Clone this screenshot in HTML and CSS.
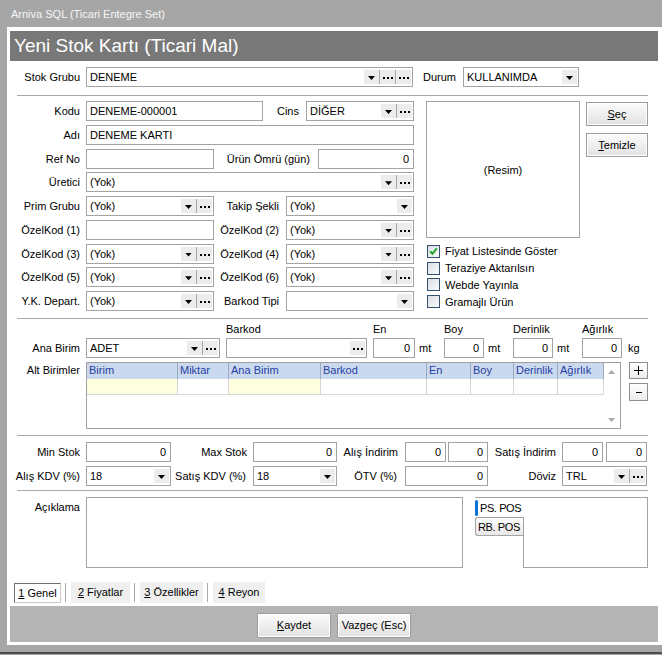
FILE: index.html
```html
<!DOCTYPE html>
<html>
<head>
<meta charset="utf-8">
<title>Yeni Stok Kartı (Ticari Mal)</title>
<link rel="stylesheet" href="styles.css">
</head>
<body>
<div class="caption">Arniva SQL (Ticari Entegre Set)</div>
<div class="window">
  <div class="head">Yeni Stok Kartı (Ticari Mal)</div>
  <div class="form">
    <div class="row">
      <label class="lbl">Stok Grubu</label>
      <div class="fld w327"><span class="val">DENEME</span><i class="dd"></i><i class="dt"></i><i class="dt"></i></div>
      <label class="mid w43">Durum</label>
      <div class="fld w116"><span class="val">KULLANIMDA</span><i class="dd"></i></div>
    </div>
    <div class="sep s1"></div>

    <div class="top">
      <div class="left">
        <div class="row">
          <label class="lbl">Kodu</label>
          <div class="fld w177"><span class="val">DENEME-000001</span></div>
          <label class="mid w36">Cins</label>
          <div class="fld w108"><span class="val">DİĞER</span><i class="dd"></i><i class="dt"></i></div>
        </div>
        <div class="row">
          <label class="lbl">Adı</label>
          <div class="fld w328"><span class="val">DENEME KARTI</span></div>
        </div>
        <div class="row">
          <label class="lbl">Ref No</label>
          <div class="fld w128"><span class="val"></span></div>
          <label class="mid w96">Ürün Ömrü (gün)</label>
          <div class="fld w96 num"><span class="val">0</span></div>
        </div>
        <div class="row">
          <label class="lbl">Üretici</label>
          <div class="fld w328"><span class="val">(Yok)</span><i class="dd"></i><i class="dt"></i></div>
        </div>
        <div class="row">
          <label class="lbl">Prim Grubu</label>
          <div class="fld w128"><span class="val">(Yok)</span><i class="dd"></i><i class="dt"></i></div>
          <label class="mid w65">Takip Şekli</label>
          <div class="fld w128"><span class="val">(Yok)</span><i class="dd"></i></div>
        </div>
        <div class="row">
          <label class="lbl">ÖzelKod (1)</label>
          <div class="fld w128"><span class="val"></span></div>
          <label class="mid w65">ÖzelKod (2)</label>
          <div class="fld w128"><span class="val">(Yok)</span><i class="dd"></i><i class="dt"></i></div>
        </div>
        <div class="row">
          <label class="lbl">ÖzelKod (3)</label>
          <div class="fld w128"><span class="val">(Yok)</span><i class="dd"></i><i class="dt"></i></div>
          <label class="mid w65">ÖzelKod (4)</label>
          <div class="fld w128"><span class="val">(Yok)</span><i class="dd"></i><i class="dt"></i></div>
        </div>
        <div class="row">
          <label class="lbl">ÖzelKod (5)</label>
          <div class="fld w128"><span class="val">(Yok)</span><i class="dd"></i><i class="dt"></i></div>
          <label class="mid w65">ÖzelKod (6)</label>
          <div class="fld w128"><span class="val">(Yok)</span><i class="dd"></i><i class="dt"></i></div>
        </div>
        <div class="row">
          <label class="lbl">Y.K. Depart.</label>
          <div class="fld w128"><span class="val">(Yok)</span><i class="dd"></i><i class="dt"></i></div>
          <label class="mid w65">Barkod Tipi</label>
          <div class="fld w128"><span class="val"></span><i class="dd"></i></div>
        </div>
      </div>

      <div class="media">
        <div class="pic">(Resim)</div>
        <div class="checks">
          <div class="chk"><span class="box"><svg width="11" height="11" viewBox="0 0 11 11"><path d="M2.2 5.4 L4.4 7.8 L8.8 2.4" fill="none" stroke="#21a121" stroke-width="2"/></svg></span>Fiyat Listesinde Göster</div>
          <div class="chk"><span class="box"></span>Teraziye Aktarılsın</div>
          <div class="chk"><span class="box"></span>Webde Yayınla</div>
          <div class="chk"><span class="box"></span>Gramajlı Ürün</div>
        </div>
      </div>

      <div class="side">
        <div class="btn sbtn"><u>S</u>eç</div>
        <div class="btn sbtn"><u>T</u>emizle</div>
      </div>
    </div>
    <div class="sep s2"></div>

    <div class="dimhead">
      <span class="dh-barkod">Barkod</span>
      <span class="dh-en">En</span>
      <span class="dh-boy">Boy</span>
      <span class="dh-der">Derinlik</span>
      <span>Ağırlık</span>
    </div>
    <div class="row r-ana">
      <label class="lbl">Ana Birim</label>
      <div class="fld w134"><span class="val">ADET</span><i class="dd"></i><i class="dt"></i></div>
      <div class="fld w141 gap6"><span class="val"></span><i class="dt"></i></div>
      <div class="fld w42 gap6 num"><span class="val">0</span></div>
      <span class="unit">mt</span>
      <div class="fld w40 num"><span class="val">0</span></div>
      <span class="unit">mt</span>
      <div class="fld w40 num"><span class="val">0</span></div>
      <span class="unit">mt</span>
      <div class="fld w40 num"><span class="val">0</span></div>
      <span class="unit kg">kg</span>
    </div>

    <div class="gridrow">
      <label class="lbl">Alt Birimler</label>
      <div class="grid">
        <div class="gbody">
          <div class="gcols ghead">
            <span>Birim</span><span>Miktar</span><span>Ana Birim</span><span>Barkod</span><span>En</span><span>Boy</span><span>Derinlik</span><span>Ağırlık</span>
          </div>
          <div class="gcols gline">
            <span class="y"></span><span></span><span class="y"></span><span></span><span></span><span></span><span></span><span></span>
          </div>
        </div>
        <div class="vscroll"><i class="up"></i><i class="down"></i></div>
      </div>
      <div class="pm">
        <div class="pmb plus"></div>
        <div class="pmb minus"></div>
      </div>
    </div>
    <div class="sep s3"></div>

    <div class="row r-min">
      <label class="lbl">Min Stok</label>
      <div class="fld w85 num"><span class="val">0</span></div>
      <label class="mid w76">Max Stok</label>
      <div class="fld w84 num"><span class="val">0</span></div>
      <label class="mid w61">Alış İndirim</label>
      <div class="fld w41 num"><span class="val">0</span></div>
      <div class="fld w40 num gap2"><span class="val">0</span></div>
      <label class="mid w68">Satış İndirim</label>
      <div class="fld w41 num"><span class="val">0</span></div>
      <div class="fld w41 num gap3"><span class="val">0</span></div>
    </div>
    <div class="row r-kdv">
      <label class="lbl">Alış KDV (%)</label>
      <div class="fld w85"><span class="val">18</span><i class="dd"></i></div>
      <label class="mid w75">Satış KDV (%)</label>
      <div class="fld w84"><span class="val">18</span><i class="dd"></i></div>
      <label class="mid w60">ÖTV (%)</label>
      <div class="fld w83 num"><span class="val">0</span></div>
      <label class="mid w68">Döviz</label>
      <div class="fld w85"><span class="val">TRL</span><i class="dd"></i><i class="dt"></i></div>
    </div>
    <div class="sep s4"></div>

    <div class="note">
      <label class="lbl">Açıklama</label>
      <div class="memo"></div>
      <div class="vtabs">
        <div class="vlist">
          <div class="vtab cur">PS. POS</div>
          <div class="vtab">RB. POS</div>
        </div>
        <div class="vpage"></div>
      </div>
    </div>

    <div class="tabs">
      <span class="tab cur t1"><u>1</u> Genel</span><i class="tsep"></i>
      <span class="tab t2"><u>2</u> Fiyatlar</span><i class="tsep"></i>
      <span class="tab t3"><u>3</u> Özellikler</span><i class="tsep"></i>
      <span class="tab t4"><u>4</u> Reyon</span>
    </div>
  </div>
  <div class="bar">
    <div class="btn bbtn"><u>K</u>aydet</div>
    <div class="btn bbtn">Vazgeç (Esc)</div>
  </div>
</div>
<div class="foot"></div>
</body>
</html>
```

FILE: styles.css
```css
body, div, span, label, i, u {
	margin:0;
	padding:0;
}
body {
	width:662px;
	height:655px;
	overflow:hidden;
	background:#a6a6a6;
	font:11px/14px "Liberation Sans", Arial, sans-serif;
	color:#000;
}
i {
	font-style:normal;
}
u {
	text-decoration:underline;
	text-underline-offset:1px;
}

/* pencere */
.caption {
	height:27px;
	line-height:28px;
	padding-left:11px;
	color:#f6f6f6;
}
.window {
	margin-left:7px;
	height:611px;
	padding:4px 4px 3px 3px;
	background:#fff;
}
.head {
	height:30px;
	line-height:30px;
	padding-left:4px;
	background:#787878;
	color:#fff;
	font-size:19px;
}
.form {
	height:545px;
	box-sizing:border-box;
	padding-top:6px;
	overflow:hidden;
}
.foot {
	height:7px;
	border-bottom:2px solid #4d4d4d;
}

/* satirlar */
.row {
	display:flex;
	align-items:center;
	height:20px;
}
.lbl {
	flex:none;
	width:70px;
	margin-right:6px;
	text-align:right;
	white-space:nowrap;
}
.mid {
	flex:none;
	margin-right:7px;
	text-align:right;
	white-space:nowrap;
}
.sep {
	width:631px;
	height:1px;
	margin-left:7px;
	background:#a8a8a8;
}
.s1 { margin-top:8px; }
.s2 { margin-top:7px; }
.s3 { margin-top:6px; }
.s4 { margin-top:4px; }

/* alanlar */
.fld {
	flex:none;
	display:flex;
	align-items:center;
	height:20px;
	box-sizing:border-box;
	border:1px solid #a3a3a3;
	background:#fff;
}
.val {
	flex:1;
	min-width:0;
	padding-left:3px;
	overflow:hidden;
	white-space:nowrap;
}
.num .val {
	text-align:right;
	padding-right:4px;
}
.dd, .dt {
	flex:none;
	display:flex;
	align-items:center;
	justify-content:center;
	width:15px;
	height:14px;
	background:#ececec;
}
.dd + .dt, .dt + .dt {
	border-left:1px solid #a8a8a8;
}
.fld i:last-child {
	margin-right:1px;
}
.dd:before {
	content:"";
	width:7px;
	height:4px;
	margin-top:2px;
	background:#000;
	clip-path:polygon(0 0, 100% 0, 50% 100%);
}
.dt:before {
	content:"";
	width:2px;
	height:2px;
	margin-top:2px;
	background:#000;
	box-shadow:4px 0 #000, -4px 0 #000;
}
.w36 { width:36px; }
.w40 { width:40px; }
.w41 { width:41px; }
.w42 { width:42px; }
.w43 { width:43px; }
.w60 { width:60px; margin-right:8px; }
.w61 { width:61px; }
.w65 { width:65px; }
.w68 { width:68px; margin-right:6px; }
.w75 { width:75px; }
.w76 { width:76px; margin-right:6px; }
.w83 { width:83px; }
.w84 { width:84px; }
.w85 { width:85px; }
.w96 { width:96px; }
.mid.w96 { margin-right:8px; }
.w108 { width:108px; }
.w116 { width:116px; }
.w128 { width:128px; }
.w134 { width:134px; }
.w141 { width:141px; }
.w177 { width:177px; }
.w327 { width:327px; }
.w328 { width:328px; }
.gap2 { margin-left:2px; }
.gap3 { margin-left:3px; }
.gap6 { margin-left:6px; }

/* ust blok */
.top {
	display:flex;
	height:210px;
	margin-top:5px;
}
.left {
	display:flex;
	flex-direction:column;
	gap:3.75px;
	width:404px;
}
.media {
	width:154px;
	margin-left:12px;
}
.pic {
	display:flex;
	align-items:center;
	justify-content:center;
	height:137px;
	box-sizing:border-box;
	border:1px solid #a3a3a3;
}
.checks {
	margin-top:5px;
}
.chk {
	display:flex;
	align-items:center;
	height:16.75px;
	white-space:nowrap;
}
.box {
	flex:none;
	width:11px;
	height:11px;
	margin:0 5px 0 1px;
	border:1px solid #34506e;
	background:linear-gradient(135deg, #d9dde2, #fbfbfb);
}
.box svg {
	display:block;
}
.side {
	display:flex;
	flex-direction:column;
	gap:7px;
	width:62px;
	margin-left:6px;
	padding-top:1px;
}
.btn {
	box-sizing:border-box;
	border:1px solid #9c9c9c;
	box-shadow:inset 0 0 0 1px #fff;
	background:linear-gradient(#fbfbfb, #e2e2e2);
	text-align:center;
}
.sbtn {
	height:24px;
	line-height:22px;
}

/* olculer */
.dimhead {
	display:flex;
	height:14px;
	margin-top:3px;
	line-height:14px;
}
.dh-barkod { margin-left:216px; width:147px; }
.dh-en { width:71px; }
.dh-boy { width:69px; }
.dh-der { width:69px; }
.r-ana {
	margin-top:2px;
}
.unit {
	flex:none;
	width:25px;
	padding-left:4px;
}
.kg {
	padding-left:6px;
}

/* alt birimler */
.gridrow {
	display:flex;
	margin-top:4px;
}
.gridrow .lbl {
	line-height:17px;
}
.grid {
	display:flex;
	width:535px;
	height:67px;
	box-sizing:border-box;
	border:1px solid #a0a0a0;
}
.gbody {
	width:517px;
}
.gcols {
	display:grid;
	grid-template-columns:91px 51px 92px 106px 44px 43px 44px 46px;
	height:16px;
}
.gcols span {
	box-sizing:border-box;
	padding-left:2px;
	line-height:15px;
}
.ghead {
	background:#cbd9ee;
	color:#2641a3;
}
.ghead span {
	border-right:1px solid #9aabc4;
}
.gline span {
	border-right:1px solid #d6d6d6;
	border-bottom:1px solid #d6d6d6;
}
.gline .y {
	background:#ffffe0;
}
.vscroll {
	display:flex;
	flex-direction:column;
	justify-content:space-between;
	align-items:center;
	width:15px;
	padding:7px 0 6px;
	box-sizing:border-box;
}
.up, .down {
	width:7px;
	height:4px;
	background:#a9a9a9;
}
.up {
	clip-path:polygon(50% 0, 100% 100%, 0 100%);
}
.down {
	clip-path:polygon(0 0, 100% 0, 50% 100%);
}
.pm {
	display:flex;
	flex-direction:column;
	gap:4px;
	margin-left:8px;
}
.pmb {
	width:19px;
	height:17px;
	box-sizing:border-box;
	border:1px solid #8f8f8f;
}
.plus {
	background:
		linear-gradient(#000, #000) 4px 7px / 9px 1px no-repeat,
		linear-gradient(#000, #000) 8px 3px / 1px 9px no-repeat,
		linear-gradient(#fff, #ececec);
}
.minus {
	height:18px;
	background:
		linear-gradient(#000, #000) 6px 8px / 6px 1px no-repeat,
		linear-gradient(#fff, #ececec);
}

/* stok ve kdv */
.r-min { margin-top:6px; }
.r-kdv { margin-top:4px; }

/* aciklama */
.note {
	display:flex;
	margin-top:6px;
	height:71px;
}
.note .lbl {
	padding-top:3px;
}
.memo {
	width:377px;
	height:71px;
	box-sizing:border-box;
	border:1px solid #a3a3a3;
}
.vtabs {
	display:flex;
	margin-left:12px;
}
.vlist {
	width:48px;
}
.vtab {
	display:flex;
	align-items:center;
	height:19px;
	box-sizing:border-box;
	padding-left:2px;
	border:1px solid #a3a3a3;
	border-right:0;
	border-radius:3px 0 0 3px;
	background:linear-gradient(#fdfdfd, #e8e8e8);
	white-space:nowrap;
	letter-spacing:-0.4px;
}
.vtab.cur {
	height:20px;
	padding-left:0;
	border:0;
	border-top:1px solid #a3a3a3;
	border-radius:0;
	background:#fff;
}
.vtab.cur:before {
	content:"";
	flex:none;
	width:3px;
	height:16px;
	margin-right:2px;
	border-radius:2px;
	background:#0b72d9;
}
.vpage {
	width:125px;
	height:71px;
	box-sizing:border-box;
	border:1px solid #a3a3a3;
	border-left:0;
	background:linear-gradient(#a3a3a3, #a3a3a3) 0 19px / 1px 100% no-repeat;
}

/* sekmeler */
.tabs {
	display:flex;
	align-items:center;
	height:21px;
	margin:14px 0 0 4px;
}
.tab {
	height:21px;
	line-height:20px;
	box-sizing:border-box;
	text-align:center;
	background:#efefef;
	white-space:nowrap;
}
.tab.cur {
	height:20px;
	line-height:18px;
	border:1px solid;
	border-color:#6f6f6f #c8c8c8 #c8c8c8 #6f6f6f;
	background:#fff;
}
.t1 { width:47px; }
.t2 { width:59px; }
.t3 { width:63px; }
.t4 { width:52px; }
.tsep {
	width:1px;
	height:19px;
	margin:0 5px 0 4px;
	background:#a8a8a8;
}

/* alt cubuk */
.bar {
	display:flex;
	align-items:center;
	justify-content:center;
	gap:6px;
	height:36px;
	background:#b4b4b4;
}
.bbtn {
	width:74px;
	height:25px;
	line-height:23px;
	margin-top:2px;
}
```
